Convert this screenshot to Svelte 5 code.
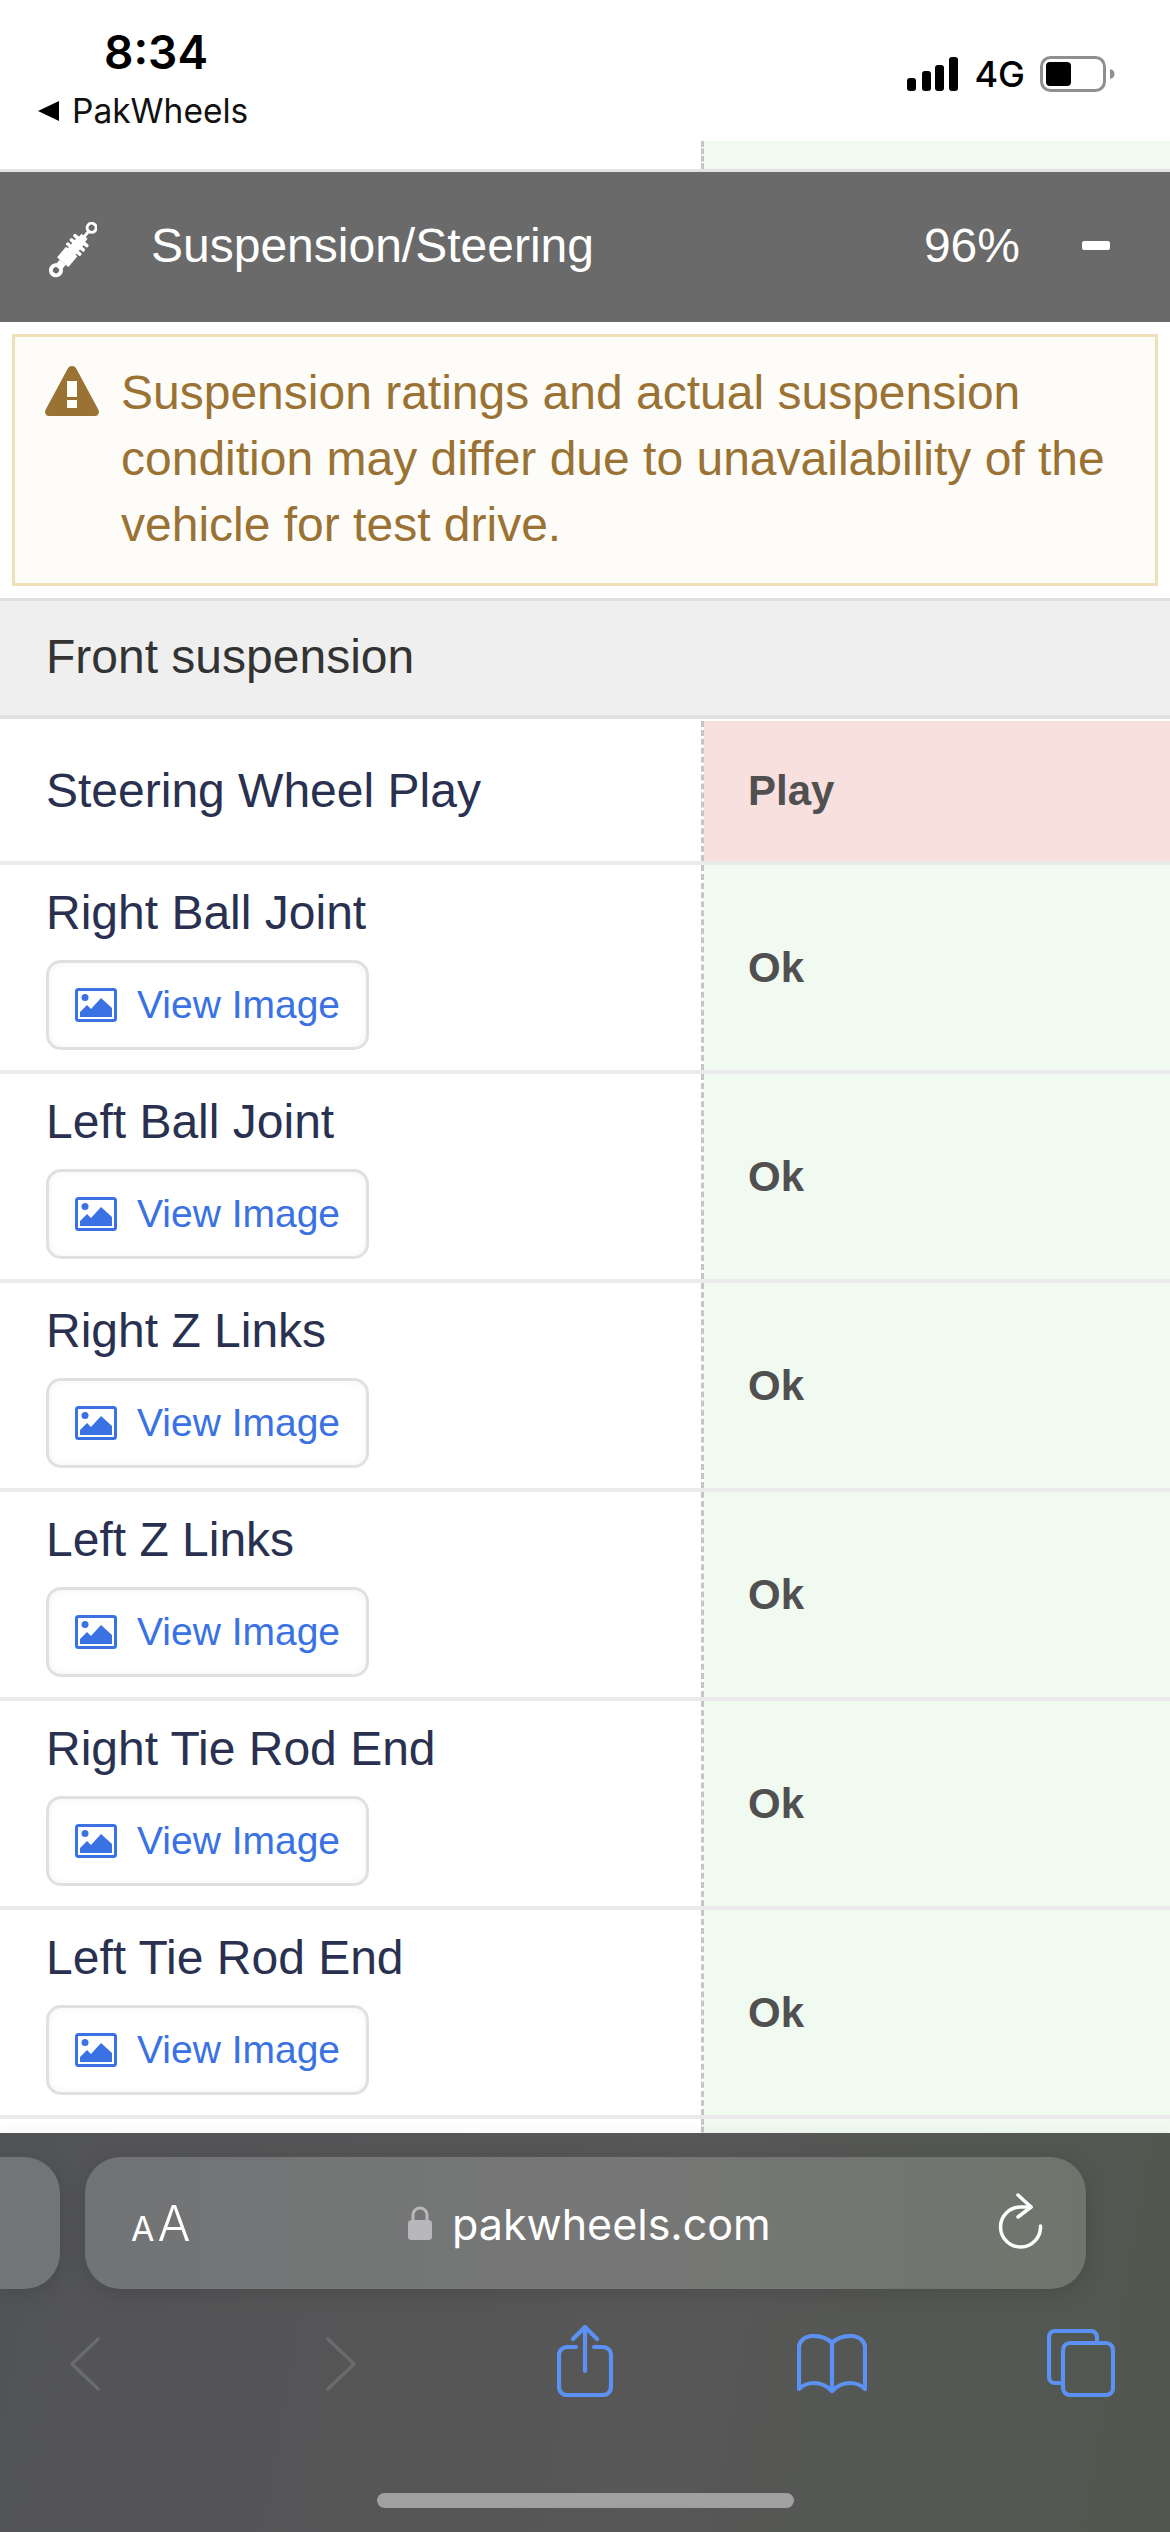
<script lang="ts">
  const rows = [
    'Right Ball Joint',
    'Left Ball Joint',
    'Right Z Links',
    'Left Z Links',
    'Right Tie Rod End',
    'Left Tie Rod End'
  ];
</script>

<div class="phone">
  <div class="status">
    <div class="status-left">
      <div class="time">8:34</div>
      <div class="back"><span class="tri"></span>PakWheels</div>
    </div>
    <div class="status-right">
      <svg class="signal" width="52" height="34" viewBox="0 0 52 34" fill="#000">
        <rect x="0" y="21" width="9" height="13" rx="3" />
        <rect x="15" y="14" width="9" height="20" rx="3" />
        <rect x="28" y="8" width="9" height="26" rx="3" />
        <rect x="42" y="0" width="9" height="34" rx="3" />
      </svg>
      <span class="net">4G</span>
      <svg class="battery" width="75" height="36" viewBox="0 0 75 36">
        <rect x="1.500" y="1.500" width="63" height="33" rx="9" fill="none" stroke="#8f8f8f" stroke-width="3" />
        <rect x="6" y="6" width="25" height="24" rx="4" fill="#000" />
        <path d="M70 13c3 .6 4.500 2.500 4.500 5s-1.500 4.400-4.500 5z" fill="#8f8f8f" />
      </svg>
    </div>
  </div>

  <div class="main">
    <div class="row stub">
      <div class="label"></div>
      <div class="value ok"></div>
    </div>

    <div class="head">
      <svg class="shock" width="48" height="56" viewBox="0 0 48 56">
        <g transform="rotate(40 24 28)" fill="#fff">
          <circle cx="24" cy="-1" r="4.500" fill="none" stroke="#fff" stroke-width="3" />
          <rect x="22.500" y="3" width="3" height="10" />
          <rect x="20" y="10" width="8" height="5" />
          <rect x="14.500" y="14" width="19" height="3.500" rx="1.700" />
          <rect x="14.500" y="19.500" width="19" height="3.500" rx="1.700" />
          <rect x="14.500" y="25" width="19" height="3.500" rx="1.700" />
          <rect x="19" y="14" width="10" height="20" />
          <rect x="16.500" y="30" width="15" height="14" rx="1" />
          <rect x="20" y="44" width="8" height="6" />
          <circle cx="24" cy="54.500" r="5" fill="none" stroke="#fff" stroke-width="4" />
        </g>
      </svg>
      <span class="head-title">Suspension/Steering</span>
      <span class="head-pct">96%</span>
      <span class="minus"></span>
    </div>

    <div class="alert">
      <svg class="warn" width="54" height="50" viewBox="0 0 54 50">
        <path fill-rule="evenodd" fill="#9a7234" d="M27 0c2 0 3.500 1.200 4.500 3l22 41c1.300 2.800-.4 6-3.500 6H4c-3.100 0-4.800-3.200-3.500-6l22-41C23.500 1.200 25 0 27 0zM22 15v16h10V15zM22 34v8h10v-8z" />
      </svg>
      <p>Suspension ratings and actual suspension condition may differ due to unavailability of the vehicle for test drive.</p>
    </div>

    <div class="section">Front suspension</div>

    <div class="row short">
      <div class="label">Steering Wheel Play</div>
      <div class="value bad">Play</div>
    </div>

    {#each rows as name}
      <div class="row">
        <div class="label">
          <div>{name}</div>
          <button class="view">
            <svg width="42" height="34" viewBox="0 0 42 34">
              <rect x="1.500" y="1.500" width="39" height="31" rx="2" fill="none" stroke="#3a71e3" stroke-width="3" />
              <circle cx="10" cy="9.500" r="3.500" fill="#3a71e3" />
              <path d="M5 29v-5l7-7 4 4 10-11 11 10v9z" fill="#3a71e3" />
            </svg>
            View Image
          </button>
        </div>
        <div class="value ok">Ok</div>
      </div>
    {/each}

    <div class="row tail">
      <div class="label"></div>
      <div class="value ok"></div>
    </div>
  </div>

  <div class="toolbar">
    <div class="pills">
      <div class="pill prev"></div>
      <div class="pill url">
        <span class="aa"><small>A</small>A</span>
        <span class="host">
          <svg width="24" height="34" viewBox="0 0 24 34">
            <path d="M5 15V9a7 7 0 0 1 14 0v6" fill="none" stroke="#b8b8bc" stroke-width="3" />
            <rect x="0" y="14" width="24" height="20" rx="3.500" fill="#b8b8bc" />
          </svg>
          <span class="host-name">pakwheels.com</span>
        </span>
        <svg class="reload" width="46" height="56" viewBox="0 0 46 56" fill="none" stroke="#fff" stroke-width="3.500" stroke-linecap="round" stroke-linejoin="round">
          <path d="M34 14H24A20 20 0 1 0 43.500 33" />
          <path d="M21 2l13 12-13 10" />
        </svg>
      </div>
    </div>
    <div class="tools">
      <svg class="i-back" width="30" height="54" viewBox="0 0 30 54" fill="none" stroke="#6a6b6c" stroke-width="3.500" stroke-linecap="round" stroke-linejoin="round">
        <path d="M28 2L2 27l26 25" />
      </svg>
      <svg class="i-fwd" width="30" height="54" viewBox="0 0 30 54" fill="none" stroke="#6a6b6c" stroke-width="3.500" stroke-linecap="round" stroke-linejoin="round">
        <path d="M2 2l26 25L2 52" />
      </svg>
      <svg class="i-share" width="56" height="72" viewBox="0 0 56 72" fill="none" stroke="#5a91f2" stroke-width="4.200" stroke-linejoin="round" stroke-linecap="round">
        <path d="M19 22H10a8 8 0 0 0-8 8v32a8 8 0 0 0 8 8h36a8 8 0 0 0 8-8V30a8 8 0 0 0-8-8h-9" />
        <path d="M28 46V2" />
        <path d="M16 14L28 2l12 12" />
      </svg>
      <svg class="i-book" width="70" height="60" viewBox="0 0 70 60" fill="none" stroke="#5a91f2" stroke-width="4.200" stroke-linejoin="round" stroke-linecap="round">
        <path d="M35 9C30 4 23 2 16 2 8 2 2 7 2 14v41c4-4 9-6 15-6 7 0 13 3 18 8 5-5 11-8 18-8 6 0 11 2 15 6V14c0-7-6-12-14-12-7 0-14 2-19 7z" />
        <path d="M35 9v48" />
      </svg>
      <svg class="i-tabs" width="68" height="68" viewBox="0 0 68 68" fill="none" stroke="#5a91f2" stroke-width="4.200" stroke-linejoin="round">
        <path d="M50 14V8a6 6 0 0 0-6-6H8a6 6 0 0 0-6 6v40a6 6 0 0 0 6 6h8" />
        <rect x="16" y="14" width="50" height="52" rx="7" />
      </svg>
    </div>
    <div class="home"></div>
  </div>
</div>

<style>
  :global(body) {
    margin: 0;
    background: #fff;
  }
  .phone {
    width: 1170px;
    height: 2532px;
    display: flex;
    flex-direction: column;
    overflow: hidden;
    font-family: 'Liberation Sans', Arial, sans-serif;
  }

  /* status bar */
  .status {
    height: 141px;
    display: flex;
    justify-content: space-between;
    align-items: flex-start;
    flex-shrink: 0;
  }
  .status-left {
    padding: 24px 0 0 38px;
  }
  .time {
    font-family: Inter, sans-serif;
    font-weight: 600;
    font-size: 46px;
    line-height: 56px;
    margin-left: 66px;
    color: #000;
  }
  .back {
    display: flex;
    align-items: center;
    gap: 13px;
    margin-top: 11px;
    font-family: Inter, sans-serif;
    font-size: 33.500px;
    line-height: 40px;
    color: #111;
  }
  .tri {
    width: 0;
    height: 0;
    border-top: 10px solid transparent;
    border-bottom: 10px solid transparent;
    border-right: 21px solid #000;
  }
  .status-right {
    display: flex;
    align-items: center;
    padding: 56px 55px 0 0;
  }
  .net {
    font-family: Inter, sans-serif;
    font-weight: 500;
    font-size: 36px;
    line-height: 36px;
    margin: 0 15px 0 15px;
    color: #000;
  }

  .main {
    flex: 1;
    display: flex;
    flex-direction: column;
    min-height: 0;
    overflow: hidden;
  }

  /* rows */
  .row {
    display: flex;
    height: 205px;
    flex-shrink: 0;
    border-bottom: 4px solid #ebebee;
  }
  .row.stub {
    height: 28px;
    border-bottom: 3px solid #e2e2e6;
  }
  .row.short {
    height: 140px;
  }
  .row.short .label {
    padding-top: 0;
    justify-content: center;
  }
  .row.tail {
    flex: 1;
    min-height: 0;
    height: auto;
    border-bottom: 0;
  }
  .label {
    width: 704px;
    box-sizing: border-box;
    padding: 21px 0 0 46px;
    display: flex;
    flex-direction: column;
    justify-content: flex-start;
    font-size: 48px;
    line-height: 54px;
    color: #2a3150;
    border-right: 3px dashed #c8c5c0;
    flex-shrink: 0;
  }
  .value {
    flex: 1;
    display: flex;
    align-items: center;
    padding-left: 44px;
    font-size: 42px;
    font-weight: 700;
    color: #505050;
  }
  .value.ok {
    background: #f0faf1;
  }
  .value.bad {
    background: #f8e0df;
  }

  /* view image button */
  .view {
    width: 323px;
    height: 90px;
    margin-top: 20px;
    padding: 0 0 0 26px;
    box-sizing: border-box;
    display: flex;
    align-items: center;
    gap: 20px;
    background: #fff;
    border: 3px solid #e0e0e4;
    border-radius: 15px;
    box-shadow: inset 0 0 8px rgba(0, 0, 0, 0.05);
    font-family: inherit;
    font-size: 39px;
    color: #3a71e3;
  }

  /* section header */
  .head {
    height: 147px;
    padding: 0 60px 3px 49px;
    flex-shrink: 0;
    display: flex;
    align-items: center;
    background: #6a6a6a;
    color: #fff;
    font-size: 48px;
  }
  .shock {
    margin-top: 9px;
  }
  .head-title {
    margin-left: 54px;
  }
  .head-pct {
    margin-left: auto;
  }
  .minus {
    width: 28px;
    height: 9px;
    margin-left: 62px;
    border-radius: 2px;
    background: #fff;
  }

  /* warning box */
  .alert {
    margin: 12px;
    height: 252px;
    flex-shrink: 0;
    box-sizing: border-box;
    border: 3px solid #efe0b8;
    background: #fdfcf8;
    display: flex;
    align-items: flex-start;
    padding: 29px 0 0 30px;
    color: #9a7234;
  }
  .warn {
    flex-shrink: 0;
  }
  .alert p {
    margin: -6px 0 0 22px;
    font-size: 48px;
    line-height: 66px;
  }

  .section {
    height: 110px;
    padding: 0 0 4px 46px;
    flex-shrink: 0;
    display: flex;
    align-items: center;
    background: #efefef;
    border-top: 3px solid #dfdfe3;
    border-bottom: 4px solid #e0e0e3;
    margin-bottom: 2px;
    font-size: 48px;
    color: #333;
  }

  /* browser chrome */
  .toolbar {
    position: relative;
    height: 399px;
    flex-shrink: 0;
    background: linear-gradient(100deg, #525356 0%, #575757 55%, #51574f 100%);
    box-shadow: 0 -4px 12px rgba(0, 0, 0, 0.03);
  }
  .pills {
    display: flex;
    gap: 25px;
    padding-top: 24px;
  }
  .pill {
    height: 132px;
    background: linear-gradient(90deg, #727375, #767776 55%, #6f756d);
    border-radius: 36px;
    box-shadow: 0 4px 20px rgba(0, 0, 0, 0.12);
  }
  .pill.prev {
    width: 60px;
    border-radius: 0 36px 36px 0;
    background: #737476;
  }
  .pill.url {
    width: 1001px;
    display: flex;
    align-items: center;
    position: relative;
    color: #fff;
  }
  .aa {
    margin-left: 46px;
    font-family: Inter, sans-serif;
    font-weight: 300;
    font-size: 49px;
    line-height: 1;
  }
  .aa small {
    font-size: 34px;
    font-weight: 400;
    margin-right: 3px;
  }
  .host {
    position: absolute;
    left: 323px;
    top: 0;
    height: 132px;
    display: flex;
    align-items: center;
    gap: 20px;
    font-size: 43px;
    font-family: Inter, sans-serif;
    font-weight: 400;
  }
  .host-name {
    margin-top: 2px;
  }
  .reload {
    margin: -4px 43px 0 auto;
  }
  .tools {
    display: flex;
    align-items: flex-end;
    height: 108px;
    padding-left: 70px;
  }
  .i-back {
    margin-bottom: 6px;
  }
  .i-fwd {
    margin: 0 0 6px 226px;
  }
  .i-share {
    margin: 0 0 0 201px;
  }
  .i-book {
    margin: 0 0 3px 184px;
  }
  .i-tabs {
    margin: 0 0 0 180px;
  }
  .home {
    width: 417px;
    height: 15px;
    margin: 96px 0 0 377px;
    border-radius: 8px;
    background: #a0a0a0;
  }
</style>
